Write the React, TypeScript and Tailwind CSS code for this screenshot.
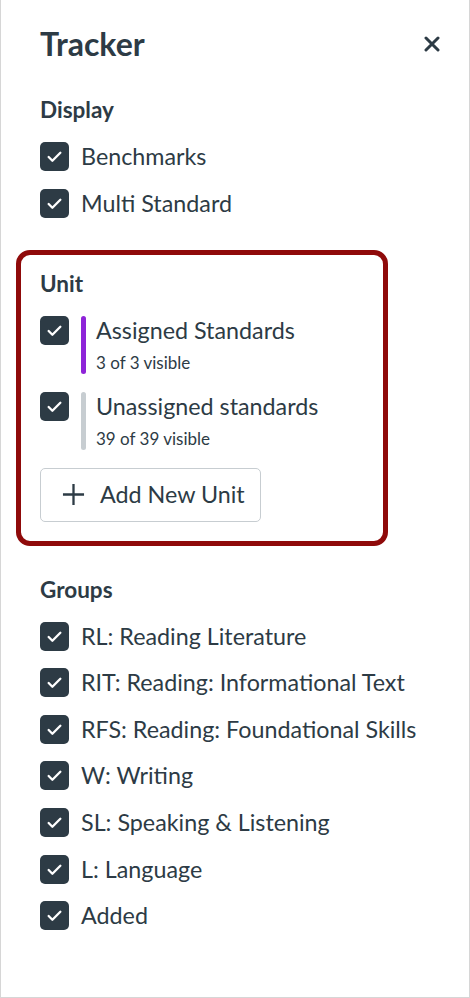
function Check() {
  return (
    <span className="flex h-[29px] w-[29px] shrink-0 items-center justify-center rounded-[5px] bg-[#2d3b45]">
      <svg width="17" height="17" viewBox="0 0 16 16" fill="none">
        <path d="M2.5 8.5l3.5 3.5 7.5-7.5" stroke="white" strokeWidth="2.2" strokeLinecap="round" strokeLinejoin="round" />
      </svg>
    </span>
  )
}

function CheckRow({ label }: { label: string }) {
  return (
    <div className="flex h-[29px] items-center gap-3">
      <Check />
      <span className="text-[23.3px] leading-[29px]">{label}</span>
    </div>
  )
}

function UnitRow({ title, sub, bar }: { title: string; sub: string; bar: string }) {
  return (
    <div className="flex items-start">
      <Check />
      <div className={`ml-3 w-[5px] self-stretch rounded-full ${bar}`}></div>
      <div className="ml-[10px] flex flex-col">
        <span className="text-[23.3px] leading-[29px]">{title}</span>
        <span className="mt-[7px] text-[17px] leading-[22px]">{sub}</span>
      </div>
    </div>
  )
}

const groups = [
  'RL: Reading Literature',
  'RIT: Reading: Informational Text',
  'RFS: Reading: Foundational Skills',
  'W: Writing',
  'SL: Speaking & Listening',
  'L: Language',
  'Added',
]

export default function App() {
  return (
    <div
      className="h-[998px] w-[470px] border-x border-b border-[#d6d6d6] bg-white text-[#2d3b45]"
      style={{ fontFamily: 'Lato, "Open Sans", sans-serif' }}
    >
      <div className="flex h-[62px] items-center justify-between pl-[39px] pr-[29px] pt-[26px]">
        <h1 className="text-[32px] font-bold leading-[36px]">Tracker</h1>
        <svg width="16" height="16" viewBox="0 0 16 16">
          <path d="M2 2l12 12M14 2L2 14" stroke="#2d3b45" strokeWidth="3" strokeLinecap="round" />
        </svg>
      </div>

      <div className="pl-[39px]">
        <h2 className="mt-[34px] text-[22.5px] font-bold leading-[28px]">Display</h2>
        <div className="mt-[18px] flex flex-col gap-[17.6px]">
          <CheckRow label="Benchmarks" />
          <CheckRow label="Multi Standard" />
        </div>
      </div>

      <div className="ml-[15px] mt-[32px] w-[372px] rounded-[14px] border-[5px] border-[#8f0a0a] pb-[19px] pl-[19px] pt-[15px]">
        <h2 className="text-[22.5px] font-bold leading-[28px]">Unit</h2>
        <div className="mt-[18px] flex flex-col gap-[18px]">
          <UnitRow title="Assigned Standards" sub="3 of 3 visible" bar="bg-[#8e24d8]" />
          <UnitRow title="Unassigned standards" sub="39 of 39 visible" bar="bg-[#c7cdd1]" />
          <button className="flex h-[54px] w-[221px] items-center gap-[15px] rounded-[5px] border border-[#c7cdd1] bg-white pl-[21px]">
            <svg width="23" height="23" viewBox="0 0 24 24">
              <path d="M12 1v22M1 12h22" stroke="#2d3b45" strokeWidth="2.4" />
            </svg>
            <span className="text-[23.3px] leading-[29px]">Add New Unit</span>
          </button>
        </div>
      </div>

      <div className="pl-[39px]">
        <h2 className="mt-[30px] text-[22.5px] font-bold leading-[28px]">Groups</h2>
        <div className="mt-[18px] flex flex-col gap-[17.6px]">
          {groups.map((g) => (
            <CheckRow key={g} label={g} />
          ))}
        </div>
      </div>
    </div>
  )
}
